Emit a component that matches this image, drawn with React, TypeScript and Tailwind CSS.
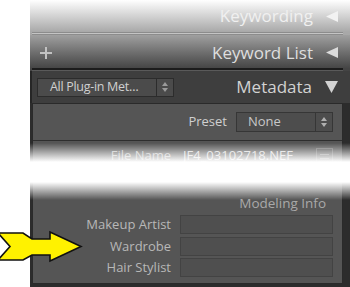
import React from "react";

function LeftTri({ color }: { color: string }) {
  return (
    <svg width="12" height="11" viewBox="0 0 12 11">
      <polygon points="12,0 12,11 0,5.5" fill={color} />
    </svg>
  );
}

function DownTri() {
  return (
    <svg width="13" height="12" viewBox="0 0 13 12">
      <polygon points="0,0 13,0 6.5,12" fill="#d2d2d2" />
    </svg>
  );
}

function Plus() {
  return (
    <svg width="12" height="12" viewBox="0 0 12 12">
      <path d="M6 0v12M0 6h12" stroke="#c2c2c2" strokeWidth="2" />
    </svg>
  );
}

function Stepper({ color = "#9a9a9a" }: { color?: string }) {
  return (
    <svg width="6" height="10" viewBox="0 0 6 10">
      <polygon points="3,0 6,4 0,4" fill={color} />
      <polygon points="0,6 6,6 3,10" fill={color} />
    </svg>
  );
}

function Arrow() {
  return (
    <svg width="84" height="34" viewBox="0 0 84 34" className="absolute left-0 top-[229px]">
      <polygon
        points="-2,4 23,4 32,10 50,10 50,3 81,17.5 50,32 50,26 32,26 23,31 -2,31 10,17.5"
        fill="#fff200"
        stroke="#111"
        strokeWidth="1.6"
        strokeLinejoin="miter"
      />
    </svg>
  );
}

const fields = ["Makeup Artist", "Wardrobe", "Hair Stylist"];

export default function App() {
  return (
    <div className="relative flex h-[287px] w-[350px] overflow-hidden bg-white font-['Open_Sans',sans-serif]">
      <div className="w-[30px] shrink-0" />
      <div className="flex flex-1 flex-col">
        {/* Keywording */}
        <div className="flex h-[32px] items-center justify-end gap-[13px] bg-gradient-to-b from-white to-[#a8a8a8] pr-[12px] text-[17px] text-[#f0f0f0]">
          <span>Keywording</span>
          <LeftTri color="#f2f2f2" />
        </div>
        <div className="bg-[#a8a8a8] pl-[2px] pr-[7px]">
          <div className="h-[3px] border-y border-[#8c8c8c] bg-[#c4c4c4]" />
        </div>
        {/* Keyword List */}
        <div className="flex h-[33px] items-center justify-between bg-gradient-to-b from-[#a0a0a0] to-[#464646] pl-[10px] pr-[12px] pt-[2px] text-[17px] text-[#dedede]">
          <Plus />
          <div className="flex items-center gap-[13px]">
            <span>Keyword List</span>
            <LeftTri color="#dcdcdc" />
          </div>
        </div>
        <div className="bg-[#444444] pl-[2px] pr-[7px]">
          <div className="h-[3px] border-b border-[#5a5a5a] bg-[#1c1c1c]" />
        </div>
        {/* Metadata */}
        <div className="flex h-[32px] items-center justify-between border-l-2 border-[#262626] bg-[#3e3e3e] pl-[5px] pr-[12px]">
          <div className="flex h-[19px] text-[12.5px] tracking-[-0.3px] text-[#d0d0d0]">
            <div className="flex w-[120px] items-center border border-[#2c2c2c] bg-[#4b4b4b] pl-[12px]">
              All Plug-in Met…
            </div>
            <div className="flex w-[17px] items-center justify-center border border-l-0 border-[#2c2c2c] bg-[#4b4b4b]">
              <Stepper />
            </div>
          </div>
          <div className="flex items-center gap-[13px] text-[17px] text-[#d2d2d2]">
            <span>Metadata</span>
            <DownTri />
          </div>
        </div>
        {/* Body */}
        <div className="flex flex-1 flex-col bg-[#2c2c2c] pb-[3px] pl-[2px] pr-[7px]">
          <div className="flex flex-1 flex-col border border-[#2a2a2a] bg-[#555555] text-[13px]">
            <div className="flex h-[37px] items-center justify-end gap-[9px] border-b border-[#2e2e2e] pr-[9px] text-[#d0d0d0]">
              <span>Preset</span>
              <div className="flex h-[20px] w-[97px] border border-[#363636] bg-[#4d4d4d]">
                <div className="flex flex-1 items-center pl-[11px] text-[#c8c8c8]">None</div>
                <div className="flex w-[17px] items-center justify-center border-l border-[#363636]">
                  <Stepper color="#b0b0b0" />
                </div>
              </div>
            </div>
            <div className="flex h-[30px] items-center gap-[9px] pr-[9px]">
              <span className="w-[138px] text-right text-[#bdbdbd]">File Name</span>
              <div className="flex h-[19px] flex-1 items-center pl-[3px] text-[#d8d8d8]">JF4_03102718.NEF</div>
              <div className="flex h-[16px] w-[17px] flex-col justify-center gap-[3px] border border-[#777] px-[3px]">
                <div className="h-px bg-[#888]" />
                <div className="h-px bg-[#888]" />
              </div>
            </div>
            <div className="h-[22px]" />
            <div className="flex h-[21px] items-center justify-end pr-[16px] text-[13.5px] text-[#a9a9a9]">Modeling Info</div>
            <div className="flex flex-col gap-[2px] pr-[9px] pt-[1px]">
              {fields.map((f) => (
                <div key={f} className="flex items-center gap-[9px]">
                  <span className="w-[138px] text-right text-[#b8b8b8]">{f}</span>
                  <div className="h-[19px] flex-1 border border-[#434343] bg-[#4f4f4f]" />
                </div>
              ))}
            </div>
          </div>
        </div>
      </div>

      {/* white torn band over the panel */}
      <div className="absolute left-0 top-[143px] flex w-full flex-col">
        <div className="h-[19px] bg-gradient-to-b from-white/0 to-white" />
        <div className="h-[20px] bg-white" />
        <div className="h-[18px] bg-gradient-to-b from-white to-white/0" />
      </div>

      <Arrow />
    </div>
  );
}
